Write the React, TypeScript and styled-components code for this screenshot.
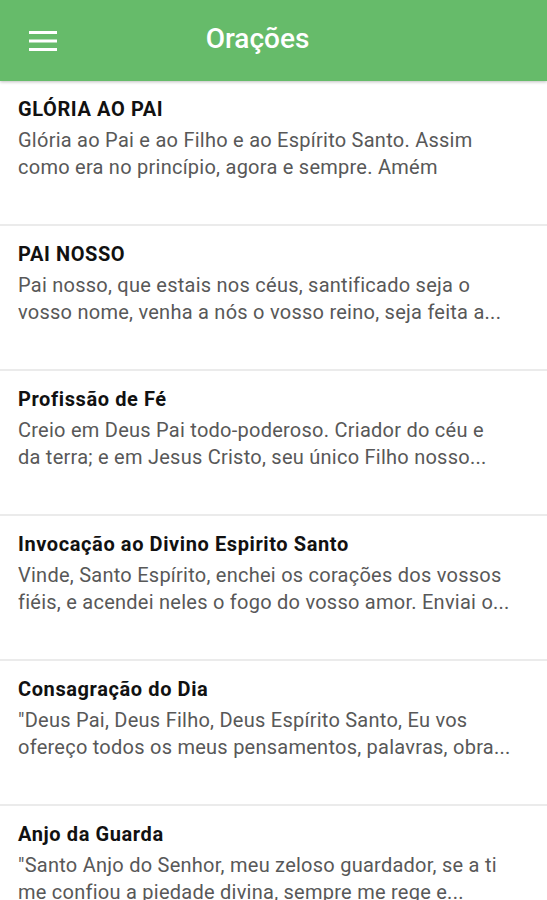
import React from "react";
import styled, { createGlobalStyle } from "styled-components";

const GlobalStyle = createGlobalStyle`
  html, body {
    margin: 0;
    padding: 0;
    background: #ffffff;
    font-family: Roboto, "Noto Sans", sans-serif;
    overflow: hidden;
  }
`;

const Screen = styled.div`
  width: 547px;
  height: 900px;
  display: flex;
  flex-direction: column;
  overflow: hidden;
  background: #ffffff;
`;

const TopBar = styled.header`
  position: relative;
  z-index: 1;
  height: 81px;
  flex-shrink: 0;
  display: grid;
  grid-template-columns: 86px 1fr 118px;
  align-items: center;
  background: #66bb6a;
  box-shadow: 0 1px 3px rgba(0, 0, 0, 0.25);
`;

const MenuButton = styled.button`
  justify-self: start;
  margin-left: 29px;
  padding: 0;
  border: none;
  background: none;
  display: flex;
`;

const Title = styled.h1`
  margin: 0 0 5px;
  text-align: center;
  color: #ffffff;
  font-size: 28px;
  line-height: 33px;
  font-weight: 500;
`;

const List = styled.ul`
  list-style: none;
  margin: 0;
  padding: 0;
`;

const Item = styled.li`
  height: 145px;
  box-sizing: border-box;
  padding: 16px 18px 0;
  border-bottom: 2px solid #ebebeb;
`;

const ItemTitle = styled.h2`
  margin: 0 0 6px;
  font-size: 20px;
  line-height: 24px;
  font-weight: 700;
  letter-spacing: 0.6px;
  color: #111111;
`;

const ItemText = styled.p`
  margin: 0;
  font-size: 20px;
  line-height: 27px;
  letter-spacing: 0.25px;
  color: #585858;
`;

const Line = styled.span`
  display: block;
  white-space: nowrap;
  overflow: hidden;
`;

const prayers = [
  {
    title: "GLÓRIA AO PAI",
    lines: [
      "Glória ao Pai e ao Filho e ao Espírito Santo. Assim",
      "como era no princípio, agora e sempre. Amém",
    ],
  },
  {
    title: "PAI NOSSO",
    lines: [
      "Pai nosso, que estais nos céus, santificado seja o",
      "vosso nome, venha a nós o vosso reino, seja feita a...",
    ],
  },
  {
    title: "Profissão de Fé",
    lines: [
      "Creio em Deus Pai todo-poderoso. Criador do céu e",
      "da terra; e em Jesus Cristo, seu único Filho nosso...",
    ],
  },
  {
    title: "Invocação ao Divino Espirito Santo",
    lines: [
      "Vinde, Santo Espírito, enchei os corações dos vossos",
      "fiéis, e acendei neles o fogo do vosso amor. Enviai o...",
    ],
  },
  {
    title: "Consagração do Dia",
    lines: [
      "\"Deus Pai, Deus Filho, Deus Espírito Santo, Eu vos",
      "ofereço todos os meus pensamentos, palavras, obra...",
    ],
  },
  {
    title: "Anjo da Guarda",
    lines: [
      "\"Santo Anjo do Senhor, meu zeloso guardador, se a ti",
      "me confiou a piedade divina, sempre me rege e...",
    ],
  },
];

const MenuIcon = () => (
  <svg width="28" height="20" viewBox="0 0 28 20" aria-hidden="true">
    <rect x="0" y="0" width="28" height="3" fill="#ffffff" />
    <rect x="0" y="8.5" width="28" height="3" fill="#ffffff" />
    <rect x="0" y="17" width="28" height="3" fill="#ffffff" />
  </svg>
);

export default function App() {
  return (
    <Screen>
      <GlobalStyle />
      <TopBar>
        <MenuButton aria-label="Menu">
          <MenuIcon />
        </MenuButton>
        <Title>Orações</Title>
      </TopBar>
      <List>
        {prayers.map((p) => (
          <Item key={p.title}>
            <ItemTitle>{p.title}</ItemTitle>
            <ItemText>
              {p.lines.map((l) => (
                <Line key={l}>{l}</Line>
              ))}
            </ItemText>
          </Item>
        ))}
      </List>
    </Screen>
  );
}
